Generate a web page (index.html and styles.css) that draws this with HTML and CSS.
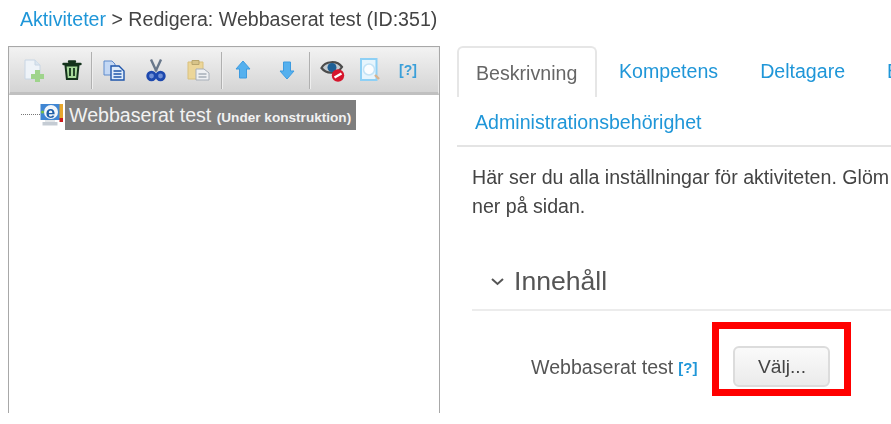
FILE: index.html
```html
<!DOCTYPE html>
<html lang="sv">
<head>
<meta charset="utf-8">
<title>Redigera: Webbaserat test</title>
<link rel="stylesheet" href="styles.css">
</head>
<body>
<div class="page">
  <div class="crumb"><a class="link">Aktiviteter</a> &gt; Redigera: Webbaserat test (ID:351)</div>
  <div class="columns">
    <section class="tree-panel">
      <div class="toolbar">
        <span class="tool t38">
          <svg width="24" height="24" viewBox="0 0 24 24"><path d="M3 2h10l5 5v14H3z" fill="#eef3f8" stroke="#c8d6e4"/><path d="M13 2v5h5" fill="#dbe6f0" stroke="#c8d6e4"/><path d="M13 12h5v4h4v5h-4v3h-5v-3H9v-5h4z" fill="#9fd48c"/></svg>
        </span>
        <span class="tool t38">
          <svg width="24" height="24" viewBox="0 0 24 24"><path d="M9 3.500h6M3.500 6h17" stroke="#14331c" stroke-width="2.400" stroke-linecap="round" fill="none"/><path d="M5.500 7.500h13l-1.400 13.500H6.900z" fill="#a6d99a" stroke="#14331c" stroke-width="2"/><path d="M10 10v8M14 10v8" stroke="#14331c" stroke-width="1.800"/></svg>
        </span>
        <span class="sep"></span>
        <span class="tool t42">
          <svg width="24" height="24" viewBox="0 0 24 24"><path d="M2 3h8l3 3v11H2z" fill="#c4d8f4" stroke="#5f8bcc"/><path d="M9 8h8l5 5v9H9z" fill="#dfecfb" stroke="#1f55aa" stroke-width="1.400"/><path d="M11.500 13h8M11.500 16h8M11.500 19h8" stroke="#1f55aa" stroke-width="1.500"/></svg>
        </span>
        <span class="tool t42">
          <svg width="24" height="24" viewBox="0 0 24 24"><path d="M7 1.500l5.500 12M17 1.500L11.500 13.500" stroke="#68778a" stroke-width="2.400" fill="none"/><circle cx="7.500" cy="18" r="3.800" fill="#6f8fd6" stroke="#1d48ae" stroke-width="2.800"/><circle cx="16.500" cy="18" r="3.800" fill="#6f8fd6" stroke="#1d48ae" stroke-width="2.800"/></svg>
        </span>
        <span class="tool t42">
          <svg width="24" height="24" viewBox="0 0 24 24"><path d="M2 4h15v17H2z" fill="#ecd699" stroke="#d9c07c"/><path d="M6 2.500h7v4H6z" fill="#d8c489" stroke="#b8a56e"/><path d="M10 11h8l5 4v7H10z" fill="#eef0f3" stroke="#a7afb9"/><path d="M12.500 16h8M12.500 19h8" stroke="#a7afb9" stroke-width="1.300"/></svg>
        </span>
        <span class="sep sep-mid"></span>
        <span class="tool t44">
          <svg width="24" height="24" viewBox="0 0 24 24"><path d="M12 3l7 8h-3.500v9h-7v-9H5z" fill="#55b0ee" stroke="#3d9be0"/></svg>
        </span>
        <span class="tool t44">
          <svg width="24" height="24" viewBox="0 0 24 24"><path d="M12 21l7-8h-3.500V4h-7v9H5z" fill="#55b0ee" stroke="#3d9be0"/></svg>
        </span>
        <span class="sep sep-end"></span>
        <span class="tool t38">
          <svg width="26" height="26" viewBox="0 0 26 26"><path d="M1.500 11C5 4 17 3 22 10c-4 6.500-15 8-20.500 1z" fill="#c4cbd0" stroke="#4b4b4b" stroke-width="2.200"/><circle cx="12" cy="10.500" r="4.500" fill="#1e5f95"/><circle cx="18" cy="18.500" r="6.200" fill="#d6152c"/><path d="M14.500 20.500l7-4" stroke="#fff" stroke-width="2.400"/></svg>
        </span>
        <span class="tool t38">
          <svg width="26" height="26" viewBox="0 0 26 26"><path d="M3 2h15.500v21H3z" fill="#e7f5fd" stroke="#8ed0f5" stroke-width="2"/><circle cx="11" cy="12.500" r="5.500" fill="#fbfdff" stroke="#c3e3f6" stroke-width="1.500"/><path d="M17 18l4 4" stroke="#d9b48e" stroke-width="2.400"/></svg>
        </span>
        <span class="help-tool">[?]</span>
      </div>
      <div class="tree-row">
        <span class="dots"></span>
        <svg class="node-icon" width="24" height="24" viewBox="0 0 24 24"><path d="M0.500 1h19.500v16H0.500z" fill="#3f86d3"/><path d="M2.500 19h15v3.500h-15z" fill="#c5ccd4"/><path d="M5 17h10v2H5z" fill="#e3e7ea"/><circle cx="2.500" cy="9" r="1.500" fill="#7ac142"/><circle cx="11" cy="9" r="7" fill="#f3f7fb"/><text x="5.800" y="14.500" class="node-e">e</text><path d="M19.500 1H23v14h-3.500z" fill="#e8a72c"/><path d="M19.500 15H23v4h-3.500z" fill="#cc1c1c"/></svg>
        <span class="node-label">Webbaserat test <b class="node-status">(Under konstruktion)</b></span>
      </div>
    </section>
    <main class="detail">
      <nav class="tabs">
        <a class="tab tab-active">Beskrivning</a>
        <a class="tab link">Kompetens</a>
        <a class="tab link">Deltagare</a>
        <a class="tab link">B</a>
        <a class="tab tab-wide link">Administrationsbehörighet</a>
      </nav>
      <p class="intro">Här ser du alla inställningar för aktiviteten. Glöm<br>ner på sidan.</p>
      <h2 class="section-head">
        <svg class="chevron" width="15" height="9" viewBox="0 0 15 9"><path d="M2 2l5.500 5L13 2" fill="none" stroke="#555" stroke-width="2"/></svg>
        Innehåll
      </h2>
      <div class="field">
        <span class="field-label">Webbaserat test</span>
        <a class="help link">[?]</a>
        <div class="marker"><button class="btn">Välj...</button></div>
      </div>
    </main>
  </div>
</div>
</body>
</html>
```

FILE: styles.css
```css
* { box-sizing: border-box; }
html, body { margin: 0; padding: 0; background: #fff; overflow: hidden; }
body { width: 891px; height: 424px; font-family: "Liberation Sans", Arial, sans-serif; color: #444; }
.page { padding-top: 9px; filter: blur(0.35px); }
.link { color: #1f96d8; }
.crumb { font-size: 19.6px; line-height: 20px; padding-left: 20px; height: 37px; color: #444; white-space: nowrap; }
.columns { display: flex; align-items: flex-start; }
.tree-panel { width: 432px; height: 367px; margin-left: 8px; border: 1px solid #a8a8a8; border-bottom: 0; background: #fff; flex: none; }
.toolbar { height: 48px; display: flex; align-items: center; padding-left: 5px; background: linear-gradient(#f2f2f2, #d4d4d4); border: 1px solid #ececec; border-bottom: 3px solid #c0c0c0; }
.tool { height: 30px; display: flex; align-items: center; justify-content: center; flex: none; }
.t38 { width: 38px; }
.t42 { width: 42px; }
.t44 { width: 44px; }
.sep { width: 2px; height: 37px; background: #b0b0b0; border-right: 1px solid #eee; flex: none; }
.sep-mid { margin: 0 -2px 0 2px; }
.sep-end { margin-right: 3px; }
.help-tool { color: #3a9fd9; font-size: 14px; font-weight: bold; margin-left: 9px; }
.tree-row { display: flex; align-items: center; padding: 3px 0 0 12px; height: 36px; }
.dots { width: 19px; border-top: 1px dotted #777; flex: none; }
.node-icon { flex: none; }
.node-e { font: bold 17px "Liberation Sans", Arial, sans-serif; fill: #1f5fa8; }
.node-label { background: #7e7e7e; color: #f2f2f2; height: 30px; line-height: 30px; padding: 0 5px 0 4px; font-size: 19.6px; margin-left: 1px; white-space: nowrap; }
.node-status { font-size: 13.6px; }
.detail { flex: none; width: 434px; margin-left: 17px; overflow: hidden; }
.tabs { display: flex; flex-wrap: wrap; width: 520px; height: 101px; border-bottom: 2px solid #e4e4e4; font-size: 19.6px; }
.tab { height: 51px; padding: 0 20px 0 22px; line-height: 51px; white-space: nowrap; }
.tab-active { width: 140px; padding: 0 0 0 17px; color: #666; border: 2px solid #e6e6e6; border-bottom: 0; border-radius: 6px 6px 0 0; }
.tab-wide { height: 48px; line-height: 50px; width: 520px; padding-left: 18px; }
.intro { margin: 0 0 0 15px; padding-top: 16px; font-size: 19.6px; line-height: 29px; color: #444; white-space: nowrap; }
.section-head { display: flex; align-items: center; margin: 30px 0 0 15px; width: 419px; height: 60px; padding: 2px 0 0 18px; border-bottom: 2px solid #ececec; font-size: 26.6px; font-weight: normal; color: #555; gap: 9px; }
.field { display: flex; align-items: flex-end; margin-top: 11px; padding-left: 74px; font-size: 19.6px; color: #555; white-space: nowrap; }
.field-label { margin-bottom: 17px; }
.help { font-size: 15px; font-weight: bold; margin: 0 0 20px 5px; }
.marker { margin-left: 15px; width: 139px; height: 74px; border: 7px solid #f00; padding: 17px 0 0 14px; flex: none; }
.btn { display: block; width: 97px; height: 41px; border: 2px solid #dcdcdc; border-radius: 6px; background: linear-gradient(#fafafa, #ebebeb); font: 19.2px "Liberation Sans", Arial, sans-serif; color: #444; padding: 0; }
```
